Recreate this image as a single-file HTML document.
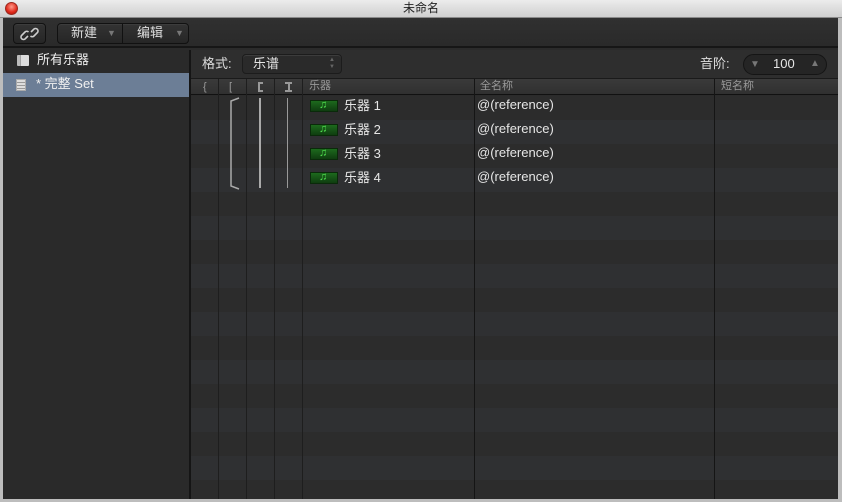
<!DOCTYPE html>
<html><head><meta charset="utf-8"><style>
*{margin:0;padding:0;box-sizing:border-box}
body{width:842px;height:502px;background:#bdbdbd;overflow:hidden;position:relative;font-family:"Liberation Sans","Noto Sans CJK SC",sans-serif;}
.abs{position:absolute}
#title{left:0;top:0;width:842px;height:18px;background:linear-gradient(#ececec,#cfcfcf);border-bottom:1px solid #8a8a8a;text-align:center;font-size:12px;line-height:17px;color:#222}
#close{left:5px;top:2px;width:13px;height:13px;border-radius:50%;background:radial-gradient(circle at 50% 35%,#ff9a8a,#e0291b 60%,#a31208);border:1px solid #9a2a20}
#win{left:3px;top:18px;width:835px;height:481px;background:#2b2b2b}
#tool{left:3px;top:18px;width:835px;height:30px;background:linear-gradient(#303030,#2a2a2a);border-bottom:2px solid #161616}
.btn{border:1px solid #111;border-radius:4px;background:linear-gradient(#333,#262626);box-shadow:inset 0 1px 0 #3c3c3c}
.tb{color:#ddd;font-size:13px;line-height:16px}
#side{left:3px;top:50px;width:186px;height:449px;background:#2a2a2a}
#vdiv{left:189px;top:50px;width:2px;height:449px;background:#151515}
#sel{left:3px;top:73px;width:186px;height:24px;background:#6c7e96}
#pane{left:191px;top:50px;width:647px;height:29px;background:#2e2e2e;border-bottom:1px solid #1a1a1a}
#hdr{left:191px;top:79px;width:647px;height:16px;background:linear-gradient(#3a3a3a,#303030);border-bottom:1px solid #111;color:#8e8e8e;font-size:11px;line-height:15px}
.row{position:absolute;left:191px;width:647px;height:24px}
.col{position:absolute;top:79px;width:1px;height:420px;background:#1e1e1e}
.cell{position:absolute;color:#e6e6e6;font-size:13px;line-height:16px}
.hd{position:absolute;color:#999;font-size:11px;line-height:15px}
.ins{position:absolute;left:310px;width:28px;height:12px;background:linear-gradient(#1d6a1d,#0f3d10);border:1px solid #0a2a0a;overflow:hidden}
.ins:after{content:"♫";position:absolute;left:8px;top:-1px;color:#4fe04f;font-size:11px;line-height:11px}
</style></head><body>
<div id="title" class="abs">未命名</div>
<div id="close" class="abs"></div>
<div id="win" class="abs"></div>
<div id="tool" class="abs"></div>
<div class="abs btn" style="left:13px;top:23px;width:33px;height:21px;text-align:center">
<svg width="20" height="14" viewBox="0 0 20 14" style="margin-top:3px"><g fill="none" stroke="#ccc" stroke-width="1.6"><path d="M8 9 L5 12 a2.5 2.5 0 0 1 -3.5 -3.5 L5 5 a2.5 2.5 0 0 1 3.5 0"/><path d="M11 5 L14 2 a2.5 2.5 0 0 1 3.5 3.5 L14 9 a2.5 2.5 0 0 1 -3.5 0"/></g></svg></div>
<div class="abs btn" style="left:57px;top:23px;width:132px;height:21px"></div>
<div class="abs" style="left:122px;top:24px;width:1px;height:19px;background:#111"></div>
<div class="abs tb" style="left:71px;top:25px">新建</div>
<div class="abs" style="left:107px;top:28px;color:#777;font-size:9px;line-height:10px">▼</div>
<div class="abs tb" style="left:137px;top:25px">编辑</div>
<div class="abs" style="left:175px;top:28px;color:#777;font-size:9px;line-height:10px">▼</div>
<div id="side" class="abs"></div>
<div id="sel" class="abs"></div>
<div class="abs" style="left:17px;top:55px;width:12px;height:11px;background:linear-gradient(90deg,#bbb 0 30%,#888 30% 35%,#ddd 35%);border-radius:1px"></div>
<div class="abs cell" style="left:37px;top:52px;color:#eee">所有乐器</div>
<div class="abs" style="left:16px;top:79px;width:10px;height:12px;background:repeating-linear-gradient(#ddd 0 2px,#999 2px 3px);border:1px solid #aaa"></div>
<div class="abs cell" style="left:36px;top:76px;color:#f0f0f0">* 完整 Set</div>
<div id="vdiv" class="abs"></div>
<div id="pane" class="abs"></div>
<div class="abs cell" style="left:202px;top:56px;color:#ddd">格式:</div>
<div class="abs btn" style="left:242px;top:54px;width:100px;height:20px;background:#2a2a2a;border-color:#1c1c1c"></div>
<div class="abs cell" style="left:253px;top:56px">乐谱</div>
<div class="abs" style="left:329px;top:57px;color:#666;font-size:6px;line-height:7px">▲<br>▼</div>
<div class="abs cell" style="left:700px;top:56px;color:#ddd">音阶:</div>
<div class="abs" style="left:743px;top:54px;width:84px;height:21px;border-radius:11px;background:#252525;border:1px solid #151515"></div>
<div class="abs" style="left:750px;top:59px;color:#777;font-size:10px;line-height:12px">▼</div>
<div class="abs cell" style="left:773px;top:56px">100</div>
<div class="abs" style="left:810px;top:58px;color:#777;font-size:10px;line-height:12px">▲</div>
<div id="hdr" class="abs"></div>
<div class="row" style="top:96px;background:#2c2c2c"></div>
<div class="row" style="top:120px;background:#2f3032"></div>
<div class="row" style="top:144px;background:#2c2c2c"></div>
<div class="row" style="top:168px;background:#2f3032"></div>
<div class="row" style="top:192px;background:#2c2c2c"></div>
<div class="row" style="top:216px;background:#2f3032"></div>
<div class="row" style="top:240px;background:#2c2c2c"></div>
<div class="row" style="top:264px;background:#2f3032"></div>
<div class="row" style="top:288px;background:#2c2c2c"></div>
<div class="row" style="top:312px;background:#2f3032"></div>
<div class="row" style="top:336px;background:#2c2c2c"></div>
<div class="row" style="top:360px;background:#2f3032"></div>
<div class="row" style="top:384px;background:#2c2c2c"></div>
<div class="row" style="top:408px;background:#2f3032"></div>
<div class="row" style="top:432px;background:#2c2c2c"></div>
<div class="row" style="top:456px;background:#2f3032"></div>
<div class="row" style="top:480px;height:19px;background:#2c2c2c"></div>
<div class="col" style="left:218px"></div>
<div class="col" style="left:246px"></div>
<div class="col" style="left:274px"></div>
<div class="col" style="left:302px"></div>
<div class="col" style="left:474px;background:#151515"></div>
<div class="col" style="left:714px;background:#151515"></div>
<div class="hd" style="left:203px;top:80px">{</div>
<div class="hd" style="left:229px;top:80px">[</div>
<div class="abs" style="left:258px;top:82px;width:5px;height:10px;border:2px solid #999;border-right:none"></div>
<div class="abs" style="left:285px;top:82px;width:7px;height:10px;border-top:2px solid #999;border-bottom:2px solid #999"></div>
<div class="abs" style="left:288px;top:82px;width:2px;height:10px;background:#999"></div>
<div class="hd" style="left:309px;top:79px">乐器</div>
<div class="hd" style="left:480px;top:79px">全名称</div>
<div class="hd" style="left:721px;top:79px">短名称</div>
<svg class="abs" style="left:228px;top:97px" width="14" height="94"><path d="M11 1 L3 4 L3 89 L11 92" fill="none" stroke="#aaa" stroke-width="1.5"/></svg>
<div class="abs" style="left:259px;top:98px;width:2px;height:90px;background:#aaa"></div>
<div class="abs" style="left:287px;top:98px;width:1px;height:90px;background:#999"></div>
<div class="ins" style="top:100px"></div><div class="cell" style="left:344px;top:98px">乐器 1</div><div class="cell" style="left:477px;top:97px">@(reference)</div>
<div class="ins" style="top:124px"></div><div class="cell" style="left:344px;top:122px">乐器 2</div><div class="cell" style="left:477px;top:121px">@(reference)</div>
<div class="ins" style="top:148px"></div><div class="cell" style="left:344px;top:146px">乐器 3</div><div class="cell" style="left:477px;top:145px">@(reference)</div>
<div class="ins" style="top:172px"></div><div class="cell" style="left:344px;top:170px">乐器 4</div><div class="cell" style="left:477px;top:169px">@(reference)</div>
</body></html>
